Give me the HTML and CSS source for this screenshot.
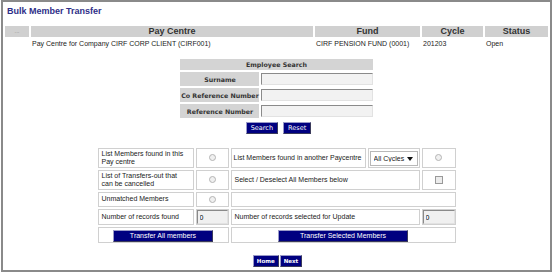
FILE: index.html
```
<!DOCTYPE html>
<html lang="en">
<head>
  <meta charset="UTF-8">
  <title>Bulk Member Transfer</title>
  <link rel="stylesheet" href="styles.css">
</head>
<body>
  <div class="frame">
    <h1 class="page-title">Bulk Member Transfer</h1>

    <table class="summary">
      <colgroup>
        <col class="c-dots"><col class="c-pay"><col class="c-fund"><col class="c-cycle"><col class="c-status">
      </colgroup>
      <thead>
        <tr>
          <th class="dots">...</th>
          <th>Pay Centre</th>
          <th>Fund</th>
          <th>Cycle</th>
          <th>Status</th>
        </tr>
      </thead>
      <tbody>
        <tr>
          <td></td>
          <td>Pay Centre for Company CIRF CORP CLIENT (CIRF001)</td>
          <td>CIRF PENSION FUND (0001)</td>
          <td>201203</td>
          <td>Open</td>
        </tr>
      </tbody>
    </table>

    <table class="search">
      <colgroup><col class="c-label"><col class="c-input"></colgroup>
      <tr><th colspan="2">Employee Search</th></tr>
      <tr><th class="label">Surname</th><td><input type="text" class="search-field"></td></tr>
      <tr><th class="label">Co Reference Number</th><td><input type="text" class="search-field"></td></tr>
      <tr><th class="label">Reference Number</th><td><input type="text" class="search-field"></td></tr>
    </table>

    <div class="btn-row search-actions">
      <button class="btn">Search</button>
      <button class="btn">Reset</button>
    </div>

    <table class="transfer">
      <colgroup>
        <col class="t1"><col class="t2"><col class="t3"><col class="t4"><col class="t5">
      </colgroup>
      <tr class="r-tall">
        <td>List Members found in this Pay centre</td>
        <td class="pick"><input type="radio" name="mode"></td>
        <td class="one-line">List Members found in another Paycentre</td>
        <td class="cycle">
          <span class="select-wrap">
            <select><option>All Cycles</option></select>
            <svg class="caret" width="6" height="4" viewBox="0 0 6 4"><path d="M0 0h6L3 4z" fill="#111"/></svg>
          </span>
        </td>
        <td class="pick"><input type="radio" name="mode"></td>
      </tr>
      <tr class="r-tall">
        <td>List of Transfers-out that can be cancelled</td>
        <td class="pick"><input type="radio" name="mode"></td>
        <td colspan="2">Select / Deselect All Members below</td>
        <td class="pick"><input type="checkbox"></td>
      </tr>
      <tr class="r-short">
        <td>Unmatched Members</td>
        <td class="pick"><input type="radio" name="mode"></td>
        <td colspan="3"></td>
      </tr>
      <tr class="r-mid">
        <td>Number of records found</td>
        <td class="field"><input type="text" class="count" value="0"></td>
        <td colspan="2">Number of records selected for Update</td>
        <td class="field"><input type="text" class="count" value="0"></td>
      </tr>
      <tr class="r-mid">
        <td colspan="2" class="action"><button class="btn btn-wide all">Transfer All members</button></td>
        <td colspan="3" class="action"><button class="btn btn-wide selected">Transfer Selected Members</button></td>
      </tr>
    </table>

    <div class="btn-row nav">
      <button class="btn nav-btn">Home</button>
      <button class="btn nav-btn">Next</button>
    </div>
  </div>
</body>
</html>
```

FILE: styles.css
```
* { box-sizing: border-box; }
body { margin: 0; background: #fff; color: #222; font-family: "Liberation Sans", Arial, sans-serif; }

.frame { margin-left: 1px; width: 551px; height: 272px; border: 2px solid #8a8a8a; padding-top: 4px; }
.page-title { margin: 0 0 7px 4px; font-size: 9px; line-height: 11px; font-weight: bold; color: #2e2e88; }

/* pay centre summary */
.summary { width: 547px; table-layout: fixed; border-spacing: 2px; }
.summary .c-dots { width: 24px; }
.summary .c-pay { width: 282px; }
.summary .c-fund { width: 105px; }
.summary .c-cycle { width: 61px; }
.summary .c-status { width: 63px; }
.summary th { background: #d0d0d0; color: #333; height: 11px; padding: 0; font-size: 9px; line-height: 11px; }
.summary th.dots { color: #8a8a8a; font-size: 6px; font-weight: normal; }
.summary td { height: 9px; padding: 0 0 0 1px; font-size: 7px; line-height: 9px; }

/* employee search */
.search { margin: 7px auto 0; width: 196px; table-layout: fixed; border-spacing: 2px; font-family: "DejaVu Sans", Verdana, sans-serif; }
.search .c-label { width: 79px; }
.search .c-input { width: 111px; }
.search th { background: #d4d4d4; color: #333; height: 11px; padding: 0; font-size: 6.3px; line-height: 11px; white-space: nowrap; }
.search th.label { height: 14px; }
.search td { height: 14px; padding: 1px 0; }
.search-field { display: block; width: 100%; height: 12px; background: #f2f2f2; border: 1px solid; border-color: #8a8a8a #e2e2e2 #e2e2e2 #8a8a8a; }

/* buttons */
.btn-row { display: flex; justify-content: center; gap: 5px; }
.search-actions { margin-top: 2px; padding-left: 4px; }
.btn { height: 12px; padding: 0 4px; background: #000080; color: #fff; border: 1px solid; border-color: #9a9ac8 #3a3a5a #3a3a5a #9a9ac8; font-family: "DejaVu Sans", Verdana, sans-serif; font-size: 6.5px; line-height: 10px; cursor: pointer; }
.btn-wide { font-family: "Liberation Sans", Arial, sans-serif; font-size: 7px; }
.btn-wide.all { width: 100px; }
.btn-wide.selected { width: 130px; }
.nav { margin-top: 10px; gap: 1px; padding-left: 2px; }
.nav-btn { padding: 0 3px; font-weight: bold; font-size: 5.5px; }

/* transfer options */
.transfer { margin: 12px auto 0; width: 362px; table-layout: fixed; border-spacing: 2px; font-size: 7px; line-height: 8.5px; }
.transfer .t1 { width: 96px; }
.transfer .t2 { width: 33px; }
.transfer .t3 { width: 135px; }
.transfer .t4 { width: 52px; }
.transfer .t5 { width: 34px; }
.transfer td { border: 1px solid #d0d0d0; padding: 0 3px; vertical-align: middle; }
.transfer td.one-line { padding: 0 2px; white-space: nowrap; overflow: hidden; }
.transfer .r-tall td { height: 20px; }
.transfer .r-short td { height: 15px; }
.transfer .r-mid td { height: 16px; }
.transfer td.pick { padding: 0; text-align: center; }
.transfer td.field { padding: 0; }
.transfer td.cycle { padding: 0 1px; }
.transfer td.action { padding: 1px 0 0; text-align: center; }

.pick input { appearance: none; display: inline-block; width: 7px; height: 7px; margin: 0; vertical-align: middle; border: 1px solid #b4b4b4; background: #f0f0f0; }
.pick input[type="radio"] { border-radius: 50%; }
.pick input[type="checkbox"] { width: 8px; height: 8px; border-color: #999; background: #ececec; }

.count { display: block; width: 100%; height: 14px; padding: 0 2px; background: #f0f0f0; border: 1px solid; border-color: #8a8a8a #e2e2e2 #e2e2e2 #8a8a8a; font-family: "Liberation Sans", Arial, sans-serif; font-size: 7px; }

.select-wrap { position: relative; display: block; }
.select-wrap select { appearance: none; display: block; width: 100%; height: 15px; padding: 0 0 0 3px; background: #fff; color: #222; border: 1px solid #b8b8b8; font-family: "Liberation Sans", Arial, sans-serif; font-size: 7px; }
.caret { position: absolute; right: 5px; top: 6px; }
```
